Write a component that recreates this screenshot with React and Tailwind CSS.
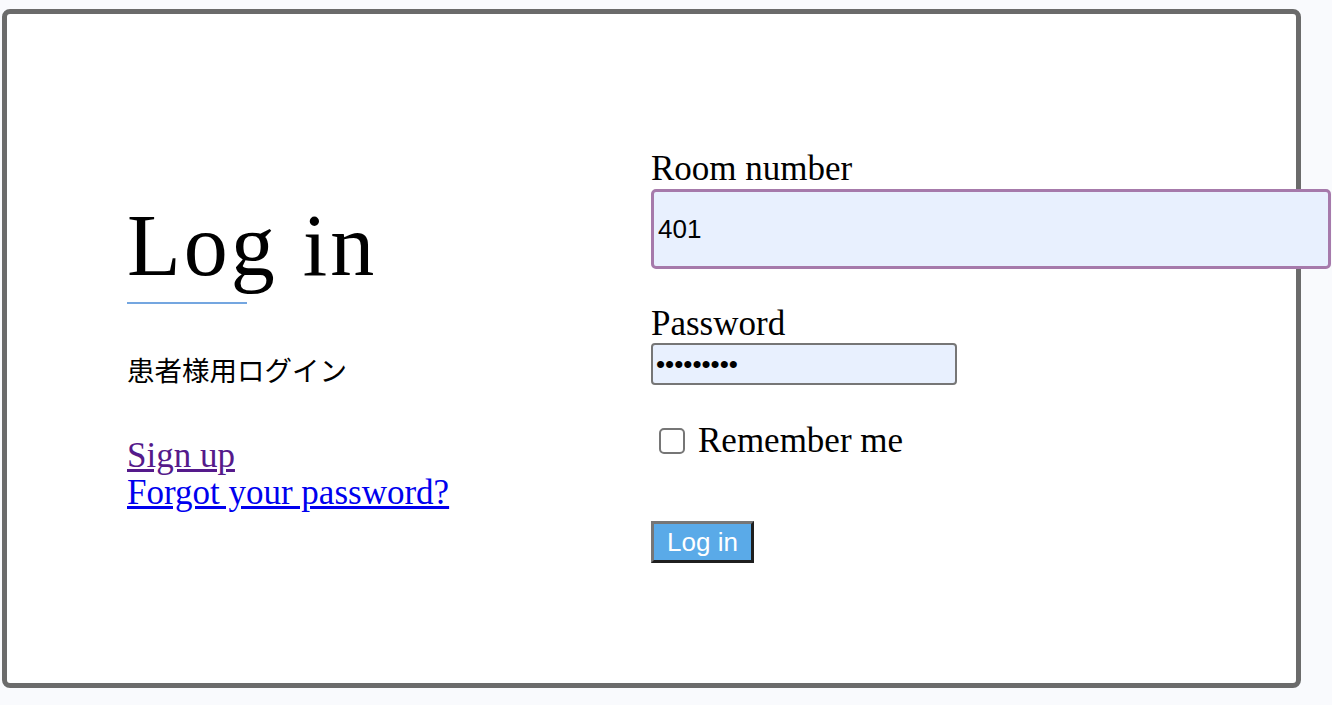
import { useState } from 'react'

const serif = "font-['Liberation_Serif',serif]"
const sans = "font-['Liberation_Sans',Arial,sans-serif]"

export default function App() {
  const [room, setRoom] = useState('401')
  const [password, setPassword] = useState('123456789')
  const [remember, setRemember] = useState(false)

  return (
    <div className="min-h-screen bg-[#f9fafd] pt-[9px] pl-[2px]">
      <div className="flex h-[679px] w-[1299px] rounded-[8px] border-[5px] border-[#6b6b6b] bg-white text-black">
        {/* left side */}
        <div className="w-[644px] shrink-0 pl-[120px]">
          <h1 className={`${serif} mt-[188px] text-[88px] leading-none font-normal tracking-[3px]`}>Log in</h1>
          <div className="mt-[12px] h-[2px] w-[120px] bg-[#74a6e0]" />
          <p className="mt-[52px] font-['Noto_Sans_CJK_JP',sans-serif] text-[27.5px] leading-none">患者様用ログイン</p>
          <div className={`${serif} mt-[53px] text-[35px] leading-[37px]`}>
            <a href="#" className="block w-fit text-[#551a8b] underline">Sign up</a>
            <a href="#" className="block w-fit text-[#0000ee] underline">Forgot your password?</a>
          </div>
        </div>

        {/* form */}
        <form className={`${serif} flex-1 text-[35px] leading-[37px]`} onSubmit={(e) => e.preventDefault()}>
          <label className="mt-[136px] mb-[2px] block">Room number</label>
          <input
            value={room}
            onChange={(e) => setRoom(e.target.value)}
            className={`${sans} relative block h-[80px] w-[680px] rounded-[5px] border-[3px] border-[#a67aab] bg-[#e8f0fe] pl-[4px] text-[26px] outline-none`}
          />

          <label className="mt-[36px] mb-[1px] block">Password</label>
          <input
            type="password"
            value={password}
            onChange={(e) => setPassword(e.target.value)}
            className={`${sans} block h-[42px] w-[306px] rounded-[4px] border-2 border-[#767676] bg-[#e8f0fe] pl-[3px] text-[26px] outline-none`}
          />

          <label className="mt-[37px] flex items-start">
            <span
              onClick={() => setRemember(!remember)}
              className="mt-[6px] ml-[8px] flex h-[26px] w-[26px] items-center justify-center rounded-[5px] border-2 border-[#767676] bg-white"
            >
              {remember && <span className="h-[12px] w-[12px] bg-[#1a73e8]" />}
            </span>
            <span className="ml-[13px]">Remember me</span>
          </label>

          <button
            type="submit"
            className={`${sans} mt-[62px] block h-[42px] w-[103px] border-[3px] border-t-[#767676] border-l-[#767676] border-b-[#1f1f1f] border-r-[#1f1f1f] bg-[#5aaae8] text-[26px] leading-none text-white`}
          >
            Log in
          </button>
        </form>
      </div>
    </div>
  )
}
